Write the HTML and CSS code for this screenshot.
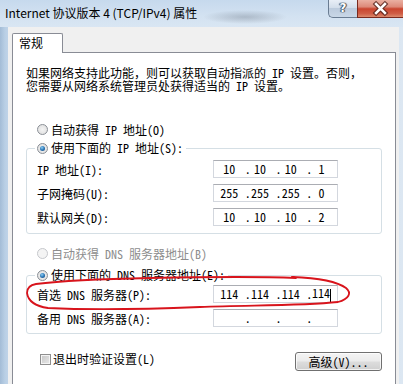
FILE: index.html
```html
<!DOCTYPE html>
<html lang="zh-CN">
<head>
<meta charset="utf-8">
<title>Internet 协议版本 4 (TCP/IPv4) 属性</title>
<link rel="stylesheet" href="styles.css">
</head>
<body>
<div class="window">
  <div class="titlebar">
    <span class="title">Internet 协议版本 4 (TCP/IPv4) 属性</span>
    <div class="caption-btns">
      <div class="cap-btn help"><span class="help-glyph">?</span></div>
      <div class="cap-btn close">
        <svg width="46" height="18" viewBox="0 0 46 18" aria-hidden="true">
          <path d="M18.5 4 L27.5 13 M27.5 4 L18.5 13" stroke="#4a1c16" stroke-width="5" stroke-linecap="square" fill="none" opacity="0.75"/>
          <path d="M18.5 4 L27.5 13 M27.5 4 L18.5 13" stroke="#ffffff" stroke-width="2.6" stroke-linecap="square" fill="none"/>
        </svg>
      </div>
    </div>
  </div>
  <div class="client">
    <div class="tabs"><div class="tab">常规</div></div>
    <div class="panel">
      <p class="intro"><span class="line">如果网络支持此功能，则可以获取自动指派的 IP 设置。否则，</span><span class="line">您需要从网络系统管理员处获得适当的 IP 设置。</span></p>

      <div class="radio-row first"><span class="radio"></span><span>自动获得 IP 地址(O)</span></div>
      <fieldset class="group g1">
        <legend><span class="legend-in"><span class="radio checked"></span><span>使用下面的 IP 地址(S):</span></span></legend>
        <div class="row"><span class="lbl">IP 地址(I):</span>
          <div class="ip"><span class="seg">10</span><span class="dot">.</span><span class="seg">10</span><span class="dot">.</span><span class="seg">10</span><span class="dot">.</span><span class="seg">1</span></div>
        </div>
        <div class="row"><span class="lbl">子网掩码(U):</span>
          <div class="ip"><span class="seg">255</span><span class="dot">.</span><span class="seg">255</span><span class="dot">.</span><span class="seg">255</span><span class="dot">.</span><span class="seg">0</span></div>
        </div>
        <div class="row"><span class="lbl">默认网关(D):</span>
          <div class="ip"><span class="seg">10</span><span class="dot">.</span><span class="seg">10</span><span class="dot">.</span><span class="seg">10</span><span class="dot">.</span><span class="seg">2</span></div>
        </div>
      </fieldset>

      <div class="radio-row disabled second"><span class="radio"></span><span>自动获得 DNS 服务器地址(B)</span></div>
      <fieldset class="group g2">
        <legend><span class="legend-in"><span class="radio checked"></span><span>使用下面的 DNS 服务器地址(E):</span></span></legend>
        <div class="row"><span class="lbl">首选 DNS 服务器(P):</span>
          <div class="ip"><span class="seg">114</span><span class="dot">.</span><span class="seg">114</span><span class="dot">.</span><span class="seg">114</span><span class="dot">.</span><span class="seg"><span>114</span><span class="caret"></span></span></div>
        </div>
        <div class="row"><span class="lbl">备用 DNS 服务器(A):</span>
          <div class="ip"><span class="seg"></span><span class="dot">.</span><span class="seg"></span><span class="dot">.</span><span class="seg"></span><span class="dot">.</span><span class="seg"></span></div>
        </div>
      </fieldset>

      <div class="bottom-row">
        <div class="check-row"><span class="checkbox"></span><span>退出时验证设置(L)</span></div>
        <div class="button">高级(V)...</div>
      </div>
    </div>
  </div>
  <svg class="annotation" width="403" height="384" viewBox="0 0 403 384" aria-hidden="true">
    <path d="M292 277 C318 278 338 282 346 288 C352 293 349 299 338 302 C300 306 250 305 200 307 C150 309 90 310 48 308 C34 306 28 300 27 293 C27 288 30 285 36 284 C60 281 100 279 150 278 C200 277 250 276 296 278" fill="none" stroke="#d8141c" stroke-width="1.8" stroke-linecap="round" stroke-linejoin="round"/>
  </svg>
</div>
</body>
</html>
```

FILE: styles.css
```css
html, body {
  margin: 0;
  padding: 0;
}
body {
  width: 403px;
  height: 384px;
  overflow: hidden;
  font-family: "Noto Sans Mono CJK SC", "Noto Sans CJK SC", sans-serif;
  font-size: 12px;
  color: #000;
}
.window {
  position: relative;
  width: 403px;
  height: 384px;
  display: flex;
  flex-direction: column;
  background: linear-gradient(90deg, #a3bcd6 0px, #b9cfe5 5px, #bfd3e8 8px, #c7d9ec 50%, #dce7f2 100%);
}
.titlebar {
  height: 27px;
  flex: 0 0 27px;
  display: flex;
  align-items: flex-start;
  background:
    radial-gradient(ellipse 42px 7px at 245px 17px, rgba(70, 80, 95, 0.28), rgba(70, 80, 95, 0) 100%),
    linear-gradient(180deg, #c6d9ed 0%, #d3e2f1 60%, #d9e6f3 100%);
}
.title {
  font-family: "Noto Sans CJK SC", sans-serif;
  font-size: 12px;
  line-height: 16px;
  padding: 5px 0 0 5px;
  color: #000;
  white-space: nowrap;
}
.caption-btns {
  margin-left: auto;
  display: flex;
  height: 18px;
}
.cap-btn {
  height: 18px;
  box-sizing: border-box;
  border: 1px solid #6a7c92;
  border-top: none;
  display: flex;
  align-items: center;
  justify-content: center;
}
.help {
  width: 29px;
  border-radius: 0 0 0 5px;
  border-right: none;
  background: linear-gradient(180deg, #e8eef6 0%, #d3deeb 45%, #bccbdd 50%, #c9d7e7 100%);
}
.help-glyph {
  font-family: "DejaVu Sans", sans-serif;
  font-weight: bold;
  font-size: 12px;
  line-height: 14px;
  color: #fff;
  text-shadow: 0 0 1px #2c3a4a, 0 0 1px #2c3a4a, 1px 0 1px #3c4a5a, -1px 0 1px #3c4a5a;
  margin-top: -2px;
}
.close {
  width: 46px;
  border-color: #7a2a1e;
  border-right: none;
  background: linear-gradient(180deg, #eab0a2 0%, #dd8a79 40%, #c9452f 52%, #cf5d45 80%, #dc8a6c 100%);
}
.close svg {
  display: block;
}
.client {
  flex: 1 1 auto;
  margin: 0 4px 0 8px;
  padding: 6px 3px 0 4px;
  background: #f0f0f0;
  display: flex;
  flex-direction: column;
}
.tabs {
  display: flex;
  position: relative;
  z-index: 1;
  margin-bottom: -1px;
}
.tab {
  width: 51px;
  height: 20px;
  box-sizing: border-box;
  border: 1px solid #898c95;
  border-bottom: none;
  border-radius: 2px 2px 0 0;
  background: #fff;
  font-family: "Noto Sans CJK SC", sans-serif;
  font-size: 12px;
  line-height: 18px;
  padding-left: 6px;
}
.panel {
  flex: 1 1 auto;
  border: 1px solid #898c95;
  border-bottom: none;
  background: #fff;
  padding: 13px 13px 0 13px;
  display: flex;
  flex-direction: column;
}
.intro {
  margin: 0;
  display: flex;
  flex-direction: column;
  white-space: nowrap;
}
.intro .line {
  display: block;
  height: 13px;
  line-height: 13px;
}
.radio-row {
  display: flex;
  align-items: center;
  height: 16px;
  padding-left: 11px;
  gap: 3px;
  white-space: nowrap;
}
.radio-row.first {
  margin-top: 29px;
}
.radio-row.second {
  margin-top: 11px;
}
.radio-row.disabled {
  color: #8d8d8d;
}
.radio {
  width: 11px;
  height: 11px;
  box-sizing: border-box;
  border-radius: 50%;
  border: 1px solid #8a8f96;
  background: radial-gradient(circle at 50% 50%, #f4f4f4 0%, #dcdcdc 100%);
  display: flex;
  align-items: center;
  justify-content: center;
  flex: 0 0 11px;
}
.radio-row.disabled .radio {
  border-color: #c6c8cc;
  background: #f4f4f4;
}
.radio.checked::after {
  content: "";
  width: 5px;
  height: 5px;
  border-radius: 50%;
  background: radial-gradient(circle at 40% 35%, #8fd0f5 0%, #2c78b8 50%, #133f70 100%);
}
.group {
  margin: 3px 0 0 0;
  padding: 4px 0 7px 8px;
  border: 1px solid #d5dfe5;
  border-radius: 3px;
  min-inline-size: 0;
  display: flex;
  flex-direction: column;
  gap: 6px;
}
.group.g2 {
  margin-top: 6px;
  padding-top: 2px;
  padding-bottom: 6px;
}
.group legend {
  padding: 0 3px 0 2px;
  height: 16px;
  line-height: 16px;
}
.legend-in {
  display: flex;
  align-items: center;
  height: 16px;
  gap: 3px;
  white-space: nowrap;
}
.row {
  display: flex;
  align-items: center;
  height: 18px;
  padding-left: 2px;
}
.lbl {
  width: 176px;
  flex: 0 0 176px;
  white-space: nowrap;
}
.ip {
  width: 125px;
  height: 18px;
  box-sizing: border-box;
  border: 1px solid #d3d7de;
  border-top-color: #abadb3;
  display: flex;
  align-items: center;
  line-height: 14px;
}
.seg {
  flex: 1 1 0;
  min-width: 0;
  text-align: center;
  white-space: nowrap;
}
.dot {
  flex: 0 0 0;
  width: 0;
  min-width: 0;
  overflow: visible;
  white-space: nowrap;
}
.caret {
  display: inline-block;
  width: 1px;
  height: 13px;
  background: #000;
  vertical-align: middle;
  margin-left: 0;
}
.bottom-row {
  margin-top: 18px;
  display: flex;
  justify-content: space-between;
  align-items: flex-start;
  padding-left: 14px;
}
.check-row {
  display: flex;
  align-items: center;
  gap: 2px;
  height: 12px;
  line-height: 12px;
  margin-top: 1px;
  white-space: nowrap;
}
.checkbox {
  width: 11px;
  height: 11px;
  box-sizing: border-box;
  border: 1px solid #8f8f8f;
  background: #f4f4f4;
  position: relative;
  flex: 0 0 11px;
}
.checkbox::after {
  content: "";
  position: absolute;
  left: 1px;
  top: 1px;
  right: 1px;
  bottom: 1px;
  background: linear-gradient(135deg, #c9c9c9 0%, #e6e6e6 100%);
}
.button {
  width: 87px;
  height: 19px;
  box-sizing: border-box;
  border: 1px solid #707070;
  border-radius: 3px;
  background: linear-gradient(180deg, #f4f4f4 0%, #ebebeb 48%, #dddddd 52%, #cfcfcf 100%);
  box-shadow: inset 0 0 0 1px rgba(255, 255, 255, 0.7);
  text-align: center;
  line-height: 17px;
  white-space: nowrap;
}
.annotation {
  position: absolute;
  left: 0;
  top: 0;
  pointer-events: none;
}
```
